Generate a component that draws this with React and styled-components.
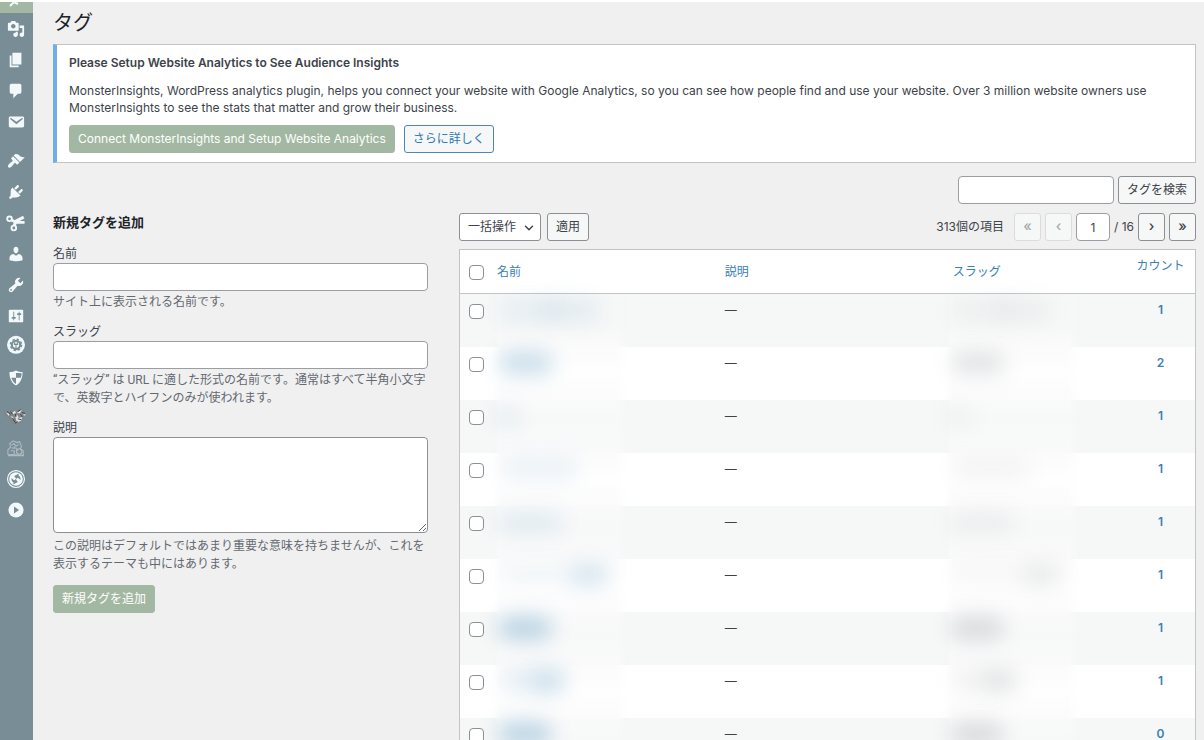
import React, { useState } from "react";
import styled, { createGlobalStyle } from "styled-components";
import { FiChevronDown } from "react-icons/fi";

const GlobalStyle = createGlobalStyle`
  * {
    box-sizing: border-box;
  }
  body {
    margin: 0;
    background: #f0f0f1;
    color: #3c434a;
    font-family: Inter, "Noto Sans CJK JP", sans-serif;
    font-size: 12px;
    line-height: 18px;
  }
  button, input, select, textarea {
    font: inherit;
    color: inherit;
  }
`;

const menu = [
  {
    name: "メディア",
    art: <path d="M13 11V4c0-.55-.45-1-1-1h-1.67L9 1H5L3.67 3H2c-.55 0-1 .45-1 1v7c0 .55.45 1 1 1h10c.55 0 1-.45 1-1zM7 4.5c1.38 0 2.5 1.12 2.5 2.5S8.38 9.5 7 9.5 4.5 8.38 4.5 7 5.62 4.5 7 4.5zM14 6h5v10.5c0 1.38-1.12 2.5-2.5 2.5S14 17.88 14 16.5s1.12-2.5 2.5-2.5c.17 0 .34.02.5.05V9h-3V6zm-4 8.05V13h2v3.5c0 1.38-1.12 2.5-2.5 2.5S7 17.88 7 16.5 8.12 14 9.5 14c.17 0 .34.02.5.05z" />,
  },
  { name: "固定ページ", art: <path d="M6 15V2h10v13H6zm-1 1h8v2H3V5h2v11z" /> },
  {
    name: "コメント",
    art: <path d="M5 2h9c1.1 0 2 .9 2 2v7c0 1.1-.9 2-2 2h-2l-5 5v-5H5c-1.1 0-2-.9-2-2V4c0-1.1.9-2 2-2z" />,
  },
  {
    name: "お問い合わせ",
    art: <path d="M3.87 4h13.25C18.37 4 19 4.59 19 5.79v8.42c0 1.19-.63 1.79-1.88 1.79H3.87c-1.25 0-1.88-.6-1.88-1.79V5.79c0-1.2.63-1.79 1.88-1.79zm6.62 8.6l6.74-5.53c.24-.2.43-.66.13-1.07-.29-.41-.82-.42-1.17-.17l-5.7 3.86L4.8 5.83c-.35-.25-.88-.24-1.17.17-.3.41-.11.87.13 1.07z" />,
  },
  {
    name: "外観",
    gap: true,
    art: <path d="M14.48 11.06L7.41 3.99l1.5-1.5c.5-.56 2.3-.47 3.51.32 1.21.8 1.43 1.28 2.91 2.1 1.18.64 2.45 1.26 4.45.85zm-.71.71L6.7 4.7 4.93 6.47c-.39.39-.39 1.02 0 1.41l1.06 1.06c.39.39.39 1.03 0 1.42-.6.6-1.43 1.11-2.21 1.69-.35.26-.7.53-1.01.84C1.43 14.23.4 16.08 1.4 17.07c.99 1 2.84-.03 4.18-1.36.31-.31.58-.66.85-1.02.57-.78 1.08-1.61 1.69-2.21.39-.39 1.02-.39 1.41 0l1.06 1.06c.39.39 1.02.39 1.41 0z" />,
  },
  {
    name: "プラグイン",
    art: <path d="M13.11 4.36L9.87 7.6 8 5.73l3.24-3.24c.35-.34 1.05-.2 1.56.32.52.51.66 1.21.31 1.55zm-8 1.77l.91-1.12 9.01 9.01-1.19.84c-.71.71-2.63 1.16-3.82 1.16H6.14L4.9 17.26c-.59.59-1.54.59-2.12 0-.59-.58-.59-1.53 0-2.12l1.24-1.24v-3.88c0-1.13.4-3.19 1.09-3.89zm7.26 3.97l3.24-3.24c.34-.35 1.04-.21 1.55.31.52.51.66 1.21.31 1.55l-3.24 3.25z" />,
  },
  {
    name: "スニペット",
    art: (
      <g fill="none" stroke="currentColor">
        <circle cx="2.8" cy="5.4" r="2.6" strokeWidth="2" />
        <circle cx="7.6" cy="15.6" r="2.6" strokeWidth="2" />
        <path d="M5 6.6L9.5 9.2h10" strokeWidth="3" />
        <path d="M8 13L10 8L18.6 3.4" strokeWidth="3.4" />
      </g>
    ),
  },
  {
    name: "ユーザー",
    art: <path d="M10 9.25c-2.27 0-2.73-3.44-2.73-3.44C7 4.02 7.82 2 9.97 2c2.16 0 2.98 2.02 2.71 3.81 0 0-.41 3.44-2.68 3.44zm0 2.57L12.72 10c2.39 0 4.52 2.33 4.52 4.53v2.49s-3.65 1.13-7.24 1.13c-3.65 0-7.24-1.13-7.24-1.13v-2.49c0-2.25 1.94-4.48 4.47-4.48z" />,
  },
  {
    name: "ツール",
    art: <path d="M16.68 9.77c-1.34 1.34-3.3 1.67-4.95.99l-5.41 6.52c-.99.99-2.59.99-3.58 0s-.99-2.59 0-3.57l6.52-5.42c-.68-1.65-.35-3.61.99-4.95 1.28-1.28 3.12-1.62 4.72-1.06l-2.89 2.89 2.82 2.82 2.86-2.87c.53 1.58.18 3.39-1.08 4.65zM3.81 16.21c.4.39 1.04.39 1.43 0 .4-.4.4-1.04 0-1.43-.39-.4-1.03-.4-1.43 0-.39.39-.39 1.03 0 1.43z" />,
  },
  {
    name: "設定",
    art: <path d="M18 16V4c0-.55-.45-1-1-1H3c-.55 0-1 .45-1 1v12c0 .55.45 1 1 1h14c.55 0 1-.45 1-1zM8 11h1c.55 0 1 .45 1 1s-.45 1-1 1H8v1.5c0 .28-.22.5-.5.5s-.5-.22-.5-.5V13H6c-.55 0-1-.45-1-1s.45-1 1-1h1V5.5c0-.28.22-.5.5-.5s.5.22.5.5V11zm5-2h-1c-.55 0-1-.45-1-1s.45-1 1-1h1V5.5c0-.28.22-.5.5-.5s.5.22.5.5V7h1c.55 0 1 .45 1 1s-.45 1-1 1h-1v5.5c0 .28-.22.5-.5.5s-.5-.22-.5-.5V9z" />,
  },
  {
    name: "SEO",
    art: (
      <>
        <circle cx="10" cy="7.6" r="10" />
        <circle cx="10" cy="7.6" r="4.6" fill="none" stroke="#788d95" strokeWidth="2.2" />
        <circle cx="10" cy="7.6" r="6.2" fill="none" stroke="#788d95" strokeWidth="1.6" strokeDasharray="2.6 2.27" />
        <path d="M8.5 4.6v2M11.5 4.6v2M7.6 7h4.8M10 8v5.6" fill="none" stroke="#788d95" strokeWidth="1.3" />
      </>
    ),
  },
  {
    name: "セキュリティ",
    art: (
      <>
        <path d="M10 1.6c2.4 1.2 4.8 1.8 7.3 1.8 0 7-2.2 12-7.3 15-5.1-3-7.3-8-7.3-15 2.5 0 4.9-.6 7.3-1.8z" />
        <path d="M10 4v5.8h5.3c.6-1.7.9-3.2 1-5.2-2.2 0-4.3-.1-6.3-.6zM10 9.8v6.8c-2.6-1.7-4.3-3.9-5.2-6.8z" fill="#788d95" />
      </>
    ),
  },
  {
    name: "ジャガー",
    gap: true,
    art: (
      <>
        <path d="M-3 3l6 1 3-2 5 1 5-3 2 3 4 3-4 3-1 5-4 4-5 1-4-4-3-4-4-3z" fill="#80868a" />
        <path d="M-1 5l4 1-1 3zM6 5l3-2 1 3-3 1zM11 5l6-3-3 4zM4 9l3 1 0 3zM9 9l3-1 1 3 4-1-1 4-5 2zM18 7l3 0-2 2z" fill="#dfe4e5" />
        <path d="M0 4l4 3M4 4l2 3M9 6l1 4M15 7l2 3M6 11l3 5M12 4l3-2M12 12l4 1M17 5l3 1M9 17l3-2" fill="none" stroke="#3f4444" strokeWidth="1.1" />
      </>
    ),
  },
  {
    name: "バックアップ",
    art: (
      <g fill="none" stroke="#aebbc0" strokeWidth="1.2">
        <path d="M1 17V12l3-3-1-4 4-3 4 2 3-1 2 5-1 3 3 2v5zM1 18.5h18" />
        <path d="M5 7l3-2 2 3 3-2M5 10h5l2 3M4 13h4v4M8 8v3" />
        <circle cx="13.5" cy="14" r="3" />
      </g>
    ),
  },
  {
    name: "リダイレクト",
    art: (
      <>
        <circle cx="10" cy="10" r="9.4" fill="none" stroke="currentColor" strokeWidth="1.3" />
        <circle cx="10" cy="10" r="7.6" />
        <path d="M8 6.6l5.2-2.6-.6 1.8c2 1.2 2.8 3.200 2.200 5.600-.8-1.700-2-2.600-3.600-2.800l-.6 1.800zM12 13.400l-5.200 2.600.6-1.800c-2-1.200-2.800-3.200-2.200-5.600.8 1.700 2 2.600 3.600 2.800l.6-1.800z" fill="#788d95" />
      </>
    ),
  },
  {
    name: "動画",
    art: (
      <>
        <circle cx="10" cy="10" r="8.4" />
        <path d="M7.8 6.2l5.6 3.8-5.6 3.8z" fill="#788d95" />
      </>
    ),
  },
];

// blurred-out names, one entry per tag: [offset, width, strength] for each smear
const tags = [
  { count: 1, blobs: [[6, 60, 0.1], [50, 56, 0.12]] },
  { count: 2, blobs: [[6, 54, 0.3]] },
  { count: 1, blobs: [[0, 28, 0.1]] },
  { count: 1, blobs: [[8, 78, 0.1]] },
  { count: 1, blobs: [[4, 66, 0.13]] },
  { count: 1, blobs: [[8, 80, 0.06], [78, 38, 0.22]] },
  { count: 1, blobs: [[5, 54, 0.38]] },
  { count: 1, blobs: [[8, 60, 0.14], [38, 36, 0.18]] },
  { count: 0, blobs: [[5, 54, 0.38]] },
];

function HiddenText({ blobs, $ink }) {
  return (
    <Smear>
      {blobs.map(([left, width, strength], i) => (
        <Blob key={i} $ink={$ink} style={{ left, width, opacity: strength }} />
      ))}
    </Smear>
  );
}

export default function App() {
  const [checked, setChecked] = useState(tags.map(() => false));
  const [page, setPage] = useState("1");

  const toggleAll = (event) => {
    setChecked(tags.map(() => event.target.checked));
  };

  const toggleOne = (index) => {
    setChecked(checked.map((value, i) => (i === index ? !value : value)));
  };

  return (
    <>
      <GlobalStyle />
      <Shell>
        <SideMenu aria-label="管理メニュー">
          <CurrentItem href="#posts" aria-label="投稿">
            <svg width="18" height="11" viewBox="0 0 18 11" fill="none" stroke="#f3f9f8">
              <path d="M3 4l4-4M7 0l4 2" strokeWidth="2" />
            </svg>
          </CurrentItem>
          {menu.map((item) => (
            <MenuItem key={item.name} href="#menu" aria-label={item.name} $gap={item.gap}>
              <svg width="18" height="18" viewBox="0 0 20 20" fill="currentColor" overflow="visible">
                {item.art}
              </svg>
            </MenuItem>
          ))}
        </SideMenu>

        <Content>
          <PageTitle>タグ</PageTitle>

          <Notice>
            <NoticeTitle>Please Setup Website Analytics to See Audience Insights</NoticeTitle>
            <NoticeText>
              MonsterInsights, WordPress analytics plugin, helps you connect your website with Google Analytics, so you
              can see how people find and use your website. Over 3 million website owners use MonsterInsights to see the
              stats that matter and grow their business.
            </NoticeText>
            <NoticeActions>
              <PrimaryButton type="button">Connect MonsterInsights and Setup Website Analytics</PrimaryButton>
              <LinkButton type="button">さらに詳しく</LinkButton>
            </NoticeActions>
          </Notice>

          <SearchRow role="search" onSubmit={(event) => event.preventDefault()}>
            <SearchInput type="search" aria-label="タグを検索" />
            <Button type="submit">タグを検索</Button>
          </SearchRow>

          <Columns>
            <AddForm onSubmit={(event) => event.preventDefault()}>
              <FormTitle>新規タグを追加</FormTitle>
              <Field>
                <label htmlFor="tag-name">名前</label>
                <TextInput id="tag-name" type="text" />
                <Help>サイト上に表示される名前です。</Help>
              </Field>
              <Field>
                <label htmlFor="tag-slug">スラッグ</label>
                <TextInput id="tag-slug" type="text" />
                <Help>
                  “スラッグ” は URL に適した形式の名前です。通常はすべて半角小文字で、英数字とハイフンのみが使われます。
                </Help>
              </Field>
              <Field>
                <label htmlFor="tag-description">説明</label>
                <TextArea id="tag-description" />
                <Help>
                  この説明はデフォルトではあまり重要な意味を持ちませんが、これを表示するテーマも中にはあります。
                </Help>
              </Field>
              <PrimaryButton type="submit">新規タグを追加</PrimaryButton>
            </AddForm>

            <div>
              <TableNav>
                <SelectWrap>
                  <Select aria-label="一括操作" defaultValue="-1">
                    <option value="-1">一括操作</option>
                    <option value="delete">削除</option>
                  </Select>
                  <FiChevronDown size={14} strokeWidth={2.5} />
                </SelectWrap>
                <Button type="button">適用</Button>
                <Pages>
                  <Total>313個の項目</Total>
                  <PageButton type="button" disabled aria-label="最初のページ">«</PageButton>
                  <PageButton type="button" disabled aria-label="前のページ">‹</PageButton>
                  <PageInput
                    type="text"
                    aria-label="現在のページ"
                    value={page}
                    onChange={(event) => setPage(event.target.value)}
                  />
                  <span>/ 16</span>
                  <PageButton type="button" aria-label="次のページ">›</PageButton>
                  <PageButton type="button" aria-label="最後のページ">»</PageButton>
                </Pages>
              </TableNav>

              <Table>
                <thead>
                  <tr>
                    <CheckHead>
                      <Checkbox
                        type="checkbox"
                        aria-label="すべて選択"
                        checked={checked.every(Boolean)}
                        onChange={toggleAll}
                      />
                    </CheckHead>
                    <Head><a href="#name">名前</a></Head>
                    <Head><a href="#description">説明</a></Head>
                    <Head $auto><a href="#slug">スラッグ</a></Head>
                    <CountHead><a href="#count">カウント</a></CountHead>
                  </tr>
                </thead>
                <tbody>
                  {tags.map((tag, index) => (
                    <Row key={index}>
                      <CheckCell>
                        <Checkbox
                          type="checkbox"
                          aria-label="選択"
                          checked={checked[index]}
                          onChange={() => toggleOne(index)}
                        />
                      </CheckCell>
                      <HiddenCell $inset="4px"><HiddenText blobs={tag.blobs} $ink="#5b9cc4" /></HiddenCell>
                      <Cell><Dash>—</Dash></Cell>
                      <HiddenCell $inset="0"><HiddenText blobs={tag.blobs} $ink="#a9adb2" /></HiddenCell>
                      <CountCell><a href="#posts">{tag.count}</a></CountCell>
                    </Row>
                  ))}
                </tbody>
              </Table>
            </div>
          </Columns>
        </Content>
      </Shell>
    </>
  );
}

const Shell = styled.div`
  display: flex;
  height: 100vh;
  overflow: hidden;
  border-top: 2px solid #fff;
`;
const SideMenu = styled.nav`
  flex: 0 0 33px;
  display: flex;
  flex-direction: column;
  background: #788d95;
`;
const MenuItem = styled.a`
  display: flex;
  align-items: center;
  justify-content: center;
  flex: 0 0 31px;
  margin-top: ${(props) => (props.$gap ? "8px" : "0")};
  padding-right: 1px;
  color: #f3f9fb;
`;
const CurrentItem = styled(MenuItem)`
  flex-basis: 11px;
  background: #a3b8a2;
`;
const Content = styled.main`
  flex: 1;
  min-width: 0;
  padding: 7px 8px 0 20px;
`;
const PageTitle = styled.h1`
  margin: 0 0 7px;
  color: #1d2327;
  font-size: 20px;
  font-weight: 400;
  line-height: 28px;
`;
const Notice = styled.section`
  padding: 9px 12px;
  background: #fff;
  border: 1px solid #c3c4c7;
  border-left: 4px solid #72aee6;
`;
const NoticeTitle = styled.h2`
  margin: 0 0 10px;
  font-size: 12px;
  font-weight: 600;
  line-height: 18px;
`;
const NoticeText = styled.p`
  margin: 0 0 9px;
  line-height: 17px;
`;
const NoticeActions = styled.div`
  display: flex;
  gap: 9px;
`;
const Button = styled.button`
  height: 28px;
  padding: 0 8px;
  background: #f6f7f7;
  border: 1px solid #8c8f94;
  border-radius: 3px;
  line-height: 18px;
  white-space: nowrap;
  cursor: pointer;
`;
const PrimaryButton = styled(Button)`
  background: #a3b8a2;
  border-color: #a3b8a2;
  color: #fff;
`;
const LinkButton = styled(Button)`
  border-color: #4a86bf;
  color: #2f78b3;
`;
const SearchRow = styled.form`
  display: flex;
  justify-content: flex-end;
  gap: 4px;
  margin: 13px 0 9px;
`;
const TextInput = styled.input`
  display: block;
  width: 100%;
  height: 28px;
  padding: 0 7px;
  background: #fff;
  border: 1px solid #9a9da1;
  border-radius: 4px;
`;
const SearchInput = styled(TextInput)`
  width: 156px;
`;
const Columns = styled.div`
  display: grid;
  grid-template-columns: 375fr 737fr;
  gap: 31px;
`;
const AddForm = styled.form`
  min-width: 0;
`;
const FormTitle = styled.h2`
  margin: 0 0 14px;
  color: #1d2327;
  font-size: 13px;
  font-weight: 700;
  line-height: 18px;
`;
const Field = styled.div`
  margin-bottom: 12px;
  label {
    display: block;
  }
`;
const Help = styled.p`
  margin: 2px 0 0;
  color: #646970;
  font-family: Roboto, "Noto Sans CJK JP", sans-serif;
`;
const TextArea = styled.textarea`
  display: block;
  width: 100%;
  height: 96px;
  margin-bottom: 4px;
  border: 1px solid #8c8f94;
  border-radius: 4px;
  background: #fff;
`;
const TableNav = styled.div`
  display: flex;
  align-items: center;
  gap: 6px;
  margin-bottom: 8px;
`;
const SelectWrap = styled.div`
  position: relative;
  svg {
    position: absolute;
    top: 8px;
    right: 5px;
    pointer-events: none;
  }
`;
const Select = styled.select`
  appearance: none;
  display: block;
  height: 28px;
  padding: 0 23px 0 8px;
  background: #fff;
  border: 1px solid #8c8f94;
  border-radius: 3px;
`;
const Pages = styled.div`
  display: flex;
  align-items: center;
  gap: 4px;
  margin-left: auto;
`;
const Total = styled.span`
  margin-right: 6px;
`;
const PageButton = styled(Button)`
  width: 27px;
  padding: 0 0 2px;
  font-size: 14px;
  font-weight: 500;
  &:disabled {
    border-color: #dcdcde;
    color: #a7aaad;
    cursor: default;
  }
`;
const PageInput = styled(TextInput)`
  width: 34px;
  padding: 0;
  text-align: center;
`;
const Table = styled.table`
  width: 100%;
  table-layout: fixed;
  border: 1px solid #c3c4c7;
  border-spacing: 0;
  background: #fff;
  a {
    color: #3a80b5;
    text-decoration: none;
  }
`;
const Head = styled.th`
  width: ${(props) => (props.$auto ? "auto" : "31%")};
  height: 44px;
  padding: 0 8px;
  border-bottom: 1px solid #c3c4c7;
  font-weight: 400;
  text-align: left;
`;
const CheckHead = styled(Head)`
  width: 29px;
  padding: 2px 0 0 9px;
`;
const CountHead = styled(Head)`
  width: 69px;
  padding: 7px 0;
  text-align: center;
  vertical-align: top;
`;
const Row = styled.tr`
  height: 53px;
  &:nth-child(odd) {
    background: #f6f7f7;
  }
`;
const Cell = styled.td`
  padding: 7px 8px;
  vertical-align: top;
`;
const Dash = styled.span`
  font-family: "Liberation Sans", sans-serif;
`;
const HiddenCell = styled(Cell)`
  padding: 0 0 0 ${(props) => props.$inset};
`;
const CheckCell = styled(Cell)`
  padding: 10px 0 0 9px;
`;
const CountCell = styled(Cell)`
  padding: 7px 0;
  font-weight: 600;
  text-align: center;
`;
const Checkbox = styled.input`
  appearance: none;
  display: block;
  width: 15px;
  height: 15px;
  margin: 0;
  background: #fff;
  border: 1px solid #8c8f94;
  border-radius: 4px;
  &:checked {
    background: #2271b1;
  }
`;
const Smear = styled.div`
  position: relative;
  width: 136px;
  height: 53px;
  &::before {
    content: "";
    display: block;
    height: 100%;
    background: linear-gradient(#fbfbfb, #fefefe 50%, #fbfbfb);
    mask-image: linear-gradient(to right, transparent, #000 8px, #000 122px, transparent);
  }
  ${Row}:nth-child(odd) &::before {
    background: linear-gradient(#fafafb, #f7f8f8 40%, #fafafb);
  }
  ${Row}:first-child &::before {
    background: linear-gradient(#f6f7f7 60%, #fbfbfb);
  }
`;
const Blob = styled.span`
  position: absolute;
  top: 4px;
  height: 24px;
  border-radius: 12px;
  background: ${(props) => props.$ink};
  filter: blur(10px);
`;
